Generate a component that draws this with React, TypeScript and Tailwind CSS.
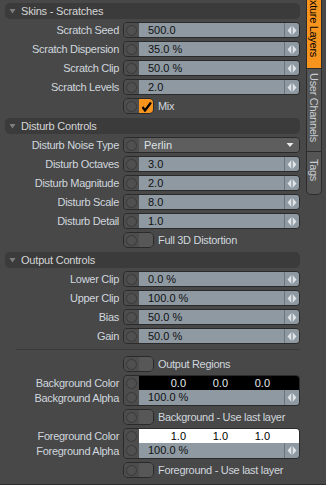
import React from "react";

const font = { fontFamily: '"Liberation Sans", Arial, sans-serif' };

function Knob() {
  return (
    <div className="w-[15px] self-stretch bg-[#4d4d4d] flex items-center justify-center">
      <div className="w-[11px] h-[11px] rounded-full border border-[#3a3a3a] bg-[#505050]"></div>
    </div>
  );
}

function Arrows() {
  return (
    <svg width="10" height="9" viewBox="0 0 10 9">
      <path d="M4 0.5 L0.5 4.5 L4 8.5Z" fill="#dfe4e8" />
      <rect x="4.5" y="0" width="1" height="9" fill="#b9c1c8" />
      <path d="M6 0.5 L9.5 4.5 L6 8.5Z" fill="#dfe4e8" />
    </svg>
  );
}

function Label({ text }: { text: string }) {
  return (
    <div className="w-[118px] pr-[4px] text-right text-[#d0d7de] text-[11px] tracking-[-0.3px] whitespace-nowrap leading-[16px]">
      {text}
    </div>
  );
}

function NumberRow({ label, value }: { label: string; value: string }) {
  return (
    <div className="flex items-center h-[16px]">
      <Label text={label} />
      <div className="flex h-[16px] w-[177px] rounded-[4px] border border-[#2a2a2a] overflow-hidden">
        <Knob />
        <div className="flex-1 bg-[#8e99a2] text-[#111] text-[11px] leading-[14px] pl-[9px]">{value}</div>
        <div className="w-[15px] bg-[#8e99a2] border-l border-[#6b757d] flex items-center justify-center">
          <Arrows />
        </div>
      </div>
    </div>
  );
}

function Toggle({ label, checked }: { label: string; checked?: boolean }) {
  return (
    <div className="flex items-center h-[16px]">
      <div className="w-[118px]"></div>
      <div className="flex h-[16px] w-[31px] rounded-[5px] border border-[#2a2a2a] overflow-hidden">
        <Knob />
        {checked ? (
          <div className="flex-1 bg-[#f7941e] flex items-center justify-center">
            <svg width="11" height="11" viewBox="0 0 11 11">
              <path d="M1.5 6 L4 9.5 L10 1.5" stroke="#000" strokeWidth="2.2" fill="none" />
            </svg>
          </div>
        ) : (
          <div className="flex-1 bg-[#575757]"></div>
        )}
      </div>
      <div className="pl-[4px] text-[#d0d7de] text-[11px] tracking-[-0.3px] whitespace-nowrap">{label}</div>
    </div>
  );
}

function Header({ title, className = "" }: { title: string; className?: string }) {
  return (
    <div className={`flex items-center h-[16px] rounded-[5px] bg-[#3b3b3b] ${className}`}>
      <svg width="16" height="16" viewBox="0 0 16 16" className="shrink-0">
        <path d="M4.5 6 L10.5 6 L7.5 10.5Z" fill="#7e7e7e" />
      </svg>
      <span className="text-[#d6d6d6] text-[11px] tracking-[-0.2px] leading-[16px]">{title}</span>
    </div>
  );
}

function ColorGroup({ label, dark }: { label: string; dark: boolean }) {
  const name = label;
  return (
    <div className="flex">
      <div className="w-[118px] flex flex-col">
        <div className="h-[15px] mt-[1px] pr-[4px] text-right text-[#d0d7de] text-[11px] tracking-[-0.3px] leading-[15px]">
          {name} Color
        </div>
        <div className="h-[15px] pr-[4px] text-right text-[#d0d7de] text-[11px] tracking-[-0.3px] leading-[15px]">
          {name} Alpha
        </div>
      </div>
      <div className="flex h-[31px] w-[177px] rounded-[4px] border border-[#2a2a2a] overflow-hidden">
        <div className="w-[15px] flex flex-col bg-[#4d4d4d]">
          <div className="h-[14px] flex items-center justify-center">
            <div className="w-[11px] h-[11px] rounded-full border border-[#3a3a3a] bg-[#505050]"></div>
          </div>
          <div className="h-[15px] flex items-center justify-center">
            <div className="w-[11px] h-[11px] rounded-full border border-[#3a3a3a] bg-[#505050]"></div>
          </div>
        </div>
        <div className="flex-1 flex flex-col">
          <div
            className={`h-[14px] flex pl-[5px] text-[11px] leading-[14px] ${
              dark ? "bg-black text-[#e4e8ec]" : "bg-white text-black"
            }`}
          >
            <div className="w-[42px] text-right">{dark ? "0.0" : "1.0"}</div>
            <div className="w-[42px] text-right">{dark ? "0.0" : "1.0"}</div>
            <div className="w-[42px] text-right">{dark ? "0.0" : "1.0"}</div>
          </div>
          <div className="h-[15px] flex bg-[#8e99a2]">
            <div className="flex-1 text-[#111] text-[11px] leading-[15px] pl-[9px]">100.0 %</div>
            <div className="w-[15px] border-l border-[#6b757d] flex items-center justify-center">
              <Arrows />
            </div>
          </div>
        </div>
      </div>
    </div>
  );
}

export default function App() {
  return (
    <div className="w-[326px] h-[485px] flex bg-[#484848] border-b border-[#2c2c2c] overflow-hidden" style={font}>
      <div className="w-[305px] pl-[5px] pr-[5px] pt-[3px] flex flex-col gap-[3px]">
        <Header title="Skins - Scratches" />
        <NumberRow label="Scratch Seed" value="500.0" />
        <NumberRow label="Scratch Dispersion" value="35.0 %" />
        <NumberRow label="Scratch Clip" value="50.0 %" />
        <NumberRow label="Scratch Levels" value="2.0" />
        <Toggle label="Mix" checked />

        <Header title="Disturb Controls" className="mt-[1px]" />
        <div className="flex items-center h-[16px]">
          <Label text="Disturb Noise Type" />
          <div className="flex h-[16px] w-[177px] rounded-[4px] border border-[#2a2a2a] overflow-hidden">
            <Knob />
            <div className="flex-1 bg-[#5e5e5e] text-[#dfe3e7] text-[11px] leading-[14px] pl-[5px] flex justify-between">
              <span>Perlin</span>
              <svg width="16" height="14" viewBox="0 0 16 14">
                <path d="M3.5 5 L10.5 5 L7 9Z" fill="#e8e8e8" />
              </svg>
            </div>
          </div>
        </div>
        <NumberRow label="Disturb Octaves" value="3.0" />
        <NumberRow label="Disturb Magnitude" value="2.0" />
        <NumberRow label="Disturb Scale" value="8.0" />
        <NumberRow label="Disturb Detail" value="1.0" />
        <Toggle label="Full 3D Distortion" />

        <Header title="Output Controls" className="mt-[1px]" />
        <NumberRow label="Lower Clip" value="0.0 %" />
        <NumberRow label="Upper Clip" value="100.0 %" />
        <NumberRow label="Bias" value="50.0 %" />
        <NumberRow label="Gain" value="50.0 %" />

        <div className="h-px bg-[#3a3a3a] ml-[11px] mt-[2px]"></div>

        <div className="mt-[3px]">
          <Toggle label="Output Regions" />
        </div>
        <ColorGroup label="Background" dark />
        <Toggle label="Background - Use last layer" />
        <ColorGroup label="Foreground" dark={false} />
        <Toggle label="Foreground - Use last layer" />
      </div>

      <div className="w-[21px] flex flex-col pl-[1px] text-[11px]">
        <div className="w-[16px] h-[69px] bg-[#f7941e] border border-[#2c2c2c] border-t-0 flex flex-col justify-end items-center overflow-hidden pb-[11px]">
          <span className="[writing-mode:vertical-rl] whitespace-nowrap text-black tracking-[-0.3px] leading-[14px]">
            Texture Layers
          </span>
        </div>
        <div className="w-[16px] h-[83px] bg-[#555555] border border-[#2c2c2c] border-t-0 flex flex-col items-center pt-[4px]">
          <span className="[writing-mode:vertical-rl] whitespace-nowrap text-[#c9ced3] tracking-[-0.3px] leading-[14px]">
            User Channels
          </span>
        </div>
        <div className="w-[16px] h-[43px] bg-[#555555] border border-[#2c2c2c] border-t-0 rounded-b-[5px] flex flex-col items-center pt-[7px]">
          <span className="[writing-mode:vertical-rl] whitespace-nowrap text-[#c9ced3] tracking-[-0.3px] leading-[14px]">
            Tags
          </span>
        </div>
      </div>
    </div>
  );
}
